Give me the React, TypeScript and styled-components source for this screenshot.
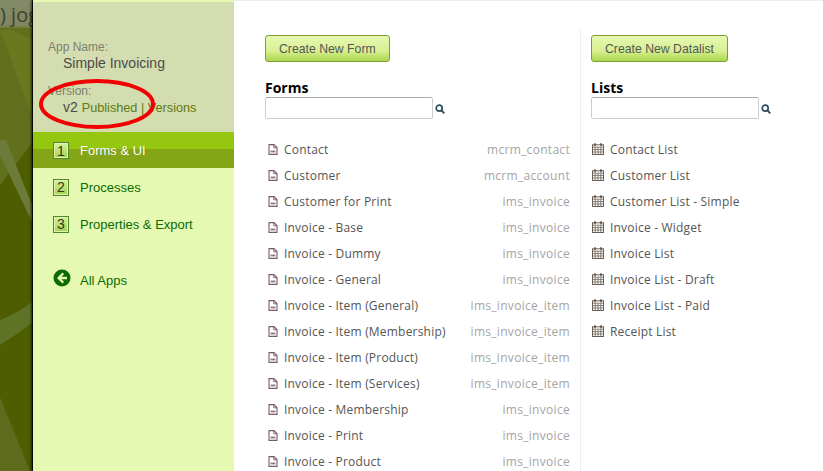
import React from 'react';
import styled, { createGlobalStyle } from 'styled-components';

const GlobalStyle = createGlobalStyle`
  html, body {
    margin: 0;
    padding: 0;
    height: 100%;
    overflow: hidden;
    background: #fff;
  }
`;

const Page = styled.div`
  position: relative;
  display: flex;
  width: 823px;
  height: 471px;
  overflow: hidden;
  font-family: "Liberation Sans", Arial, sans-serif;
`;

const Backdrop = styled.div`
  flex: 0 0 32px;
  overflow: hidden;
  background: #4d5d00;
  border-right: 1px solid #0e1200;
`;

const BackdropTop = styled.div`
  height: 28px;
  padding: 4px 0 0 0;
  box-sizing: border-box;
  background: linear-gradient(#838a68, #7f8660 90%, #6f7a3a);
  color: #3c4230;
  font-family: "Open Sans", sans-serif;
  font-size: 20px;
  line-height: 22px;
  white-space: nowrap;
`;

const BackdropArt = styled.svg`
  display: block;
`;

const Side = styled.aside`
  position: relative;
  flex: 0 0 201px;
  background: #e5f9b3;
  border-top: 2px solid #e5f9b3;
  box-sizing: border-box;
  box-shadow: -2px 0 2px rgba(0, 0, 0, 0.6);
`;

const AppInfo = styled.div`
  height: 130px;
  box-sizing: border-box;
  padding: 38px 15px 0;
  background: #d4ddb0;
  font-size: 12px;
`;

const InfoLabel = styled.div`
  color: #7b7f6c;
  line-height: 14px;
`;

const InfoValue = styled.div`
  color: #4a4a4a;
  font-size: 14px;
  line-height: 18px;
  padding-left: 15px;
  margin-bottom: 12px;
  white-space: nowrap;
`;

const InfoStatus = styled.span`
  color: #5f7a10;
  font-size: 12.7px;
`;

const NavItem = styled.div<{ $active?: boolean }>`
  display: flex;
  align-items: center;
  gap: 11px;
  height: ${p => (p.$active ? '36px' : '37px')};
  padding: 1px 0 0 20px;
  box-sizing: border-box;
  font-size: 13px;
  color: ${p => (p.$active ? '#fff' : '#0b6b00')};
  background: ${p => (p.$active ? 'linear-gradient(#95c711 0, #95c711 17px, #84a616 17px, #84a616 100%)' : 'none')};
  text-shadow: ${p => (p.$active ? '1px 0 0 rgba(90, 100, 0, 0.35)' : 'none')};
  white-space: nowrap;
`;

const NavNumber = styled.span`
  display: flex;
  align-items: center;
  justify-content: center;
  width: 14px;
  height: 15px;
  background: linear-gradient(#d6f09a, #a5d24e);
  border: 1px solid #4f8a2a;
  box-shadow: inset 0 0 0 1px #e2f3b4;
  color: #2d3b1c;
  font-size: 14px;
  text-shadow: none;
`;

const BackItem = styled(NavItem)`
  margin-top: 19px;
  gap: 9px;
`;

const BackIcon = styled.svg`
  margin-bottom: 4px;
`;

const Main = styled.main`
  flex: 1;
  display: flex;
  border-top: 1px solid #eee;
  padding: 29px 0 0 31px;
  box-sizing: border-box;
  background: #fff;
`;

const Column = styled.section<{ $wide?: boolean }>`
  width: ${p => (p.$wide ? '305px' : '232px')};
  padding-top: 5px;
`;

const Divider = styled.div`
  width: 1px;
  margin: 0 10px;
  background: #eee;
`;

const CreateButton = styled.button`
  display: block;
  height: 27px;
  padding: 0 13px;
  border: 1px solid #7ca02a;
  border-radius: 3px;
  background: linear-gradient(#e6f8b4, #d8f090 60%, #a9d64f);
  color: #555;
  font-family: "Liberation Sans", Arial, sans-serif;
  font-size: 12.25px;
`;

const Heading = styled.h3`
  margin: 17px 0 0;
  padding-bottom: 1px;
  color: #000;
  font-family: "Open Sans", sans-serif;
  font-size: 14px;
  font-weight: 700;
  line-height: 17px;
`;

const SearchRow = styled.div`
  display: flex;
  align-items: center;
  gap: 2px;
`;

const SearchInput = styled.input`
  width: 168px;
  height: 22px;
  box-sizing: border-box;
  padding: 0 4px;
  border: 1px solid #ccc;
  border-top-color: #aaa;
  border-radius: 2px;
  background: #fff;
`;

const SearchGlyph = styled.svg`
  flex: none;
  margin-top: 2px;
`;

const ItemList = styled.ul`
  list-style: none;
  margin: 17px 0 0;
  padding: 0;
`;

const ItemRow = styled.li`
  display: flex;
  align-items: center;
  height: 26px;
  color: #555;
  font-family: "Open Sans", sans-serif;
  font-size: 12px;
  white-space: nowrap;
`;

const ItemName = styled.span`
  margin-left: 6px;
  flex: 1;
  letter-spacing: 0.2px;
`;

const ItemTable = styled.span`
  color: #a5a5a5;
  letter-spacing: 0.3px;
`;

const FileGlyph = styled.svg`
  flex: none;
  margin-left: 3px;
`;

const CalendarGlyph = styled.svg`
  flex: none;
  margin-left: 1px;
`;

const Mark = styled.svg`
  position: absolute;
  left: 0;
  top: 0;
  pointer-events: none;
`;

const FileIcon = () => (
  <FileGlyph width="10" height="11" viewBox="0 0 10 11">
    <path d="M1 .6h5l3 3v6.8H1z" fill="none" stroke="#7b5a68" strokeWidth="1.1" />
    <path d="M5.8 1v2.8h3" fill="none" stroke="#7b5a68" />
    <path d="M2.6 6.6h4.8v1.8H2.6z" fill="#8d7480" />
  </FileGlyph>
);

const CalendarIcon = () => (
  <CalendarGlyph width="12" height="12" viewBox="0 0 12 12">
    <rect x=".5" y="1.8" width="11" height="9.7" fill="none" stroke="#6b5f55" />
    <path d="M.5 4.2h11M.5 6.6h11M.5 9h11M3.2 4.2v7M6 4.2v7M8.8 4.2v7" stroke="#6b5f55" strokeWidth=".8" />
    <path d="M3 .2v3M9 .2v3" stroke="#5c4a3d" strokeWidth="1.5" />
  </CalendarGlyph>
);

const SearchIcon = () => (
  <SearchGlyph width="10" height="10" viewBox="0 0 10 10">
    <circle cx="4.2" cy="4.2" r="3" fill="none" stroke="#2d5060" strokeWidth="1.7" />
    <path d="M6.5 6.5l2.8 2.8" stroke="#2d5060" strokeWidth="1.9" />
  </SearchGlyph>
);

const forms = [
  ['Contact', 'mcrm_contact'],
  ['Customer', 'mcrm_account'],
  ['Customer for Print', 'ims_invoice'],
  ['Invoice - Base', 'ims_invoice'],
  ['Invoice - Dummy', 'ims_invoice'],
  ['Invoice - General', 'ims_invoice'],
  ['Invoice - Item (General)', 'ims_invoice_item'],
  ['Invoice - Item (Membership)', 'ims_invoice_item'],
  ['Invoice - Item (Product)', 'ims_invoice_item'],
  ['Invoice - Item (Services)', 'ims_invoice_item'],
  ['Invoice - Membership', 'ims_invoice'],
  ['Invoice - Print', 'ims_invoice'],
  ['Invoice - Product', 'ims_invoice'],
];

const lists = [
  'Contact List',
  'Customer List',
  'Customer List - Simple',
  'Invoice - Widget',
  'Invoice List',
  'Invoice List - Draft',
  'Invoice List - Paid',
  'Receipt List',
];

export default function App() {
  return (
    <Page>
      <GlobalStyle />
      <Backdrop>
        <BackdropTop>)&nbsp;jog</BackdropTop>
        <BackdropArt width="32" height="443" viewBox="0 28 32 443">
          <path d="M0 28h32v115l-19 25-13 17z" fill="#62701e" />
          <path d="M0 30l12 0 20 10v75z" fill="#6b7820" />
          <path d="M0 140l6 0 26 65v17L0 155z" fill="#6c7a3a" />
          <path d="M0 320q16-6 32-18v21q-16 12-32 22z" fill="#5f7327" />
          <path d="M0 397l30 74H0z" fill="#5f6b1c" />
        </BackdropArt>
      </Backdrop>
      <Side>
        <AppInfo>
          <InfoLabel>App Name:</InfoLabel>
          <InfoValue>Simple Invoicing</InfoValue>
          <InfoLabel>Version:</InfoLabel>
          <InfoValue>v2 <InfoStatus>Published | Versions</InfoStatus></InfoValue>
        </AppInfo>
        <NavItem $active><NavNumber>1</NavNumber>Forms &amp; UI</NavItem>
        <NavItem><NavNumber>2</NavNumber>Processes</NavItem>
        <NavItem><NavNumber>3</NavNumber>Properties &amp; Export</NavItem>
        <BackItem>
          <BackIcon width="18" height="18" viewBox="0 0 18 18">
            <circle cx="9" cy="9" r="8.5" fill="#0b6b00" />
            <path d="M9.5 3.6L4 9l5.5 5.4 1.6-1.6L8.4 10.2H14V7.8H8.4l2.7-2.6z" fill="#e5f9b3" />
          </BackIcon>
          All Apps
        </BackItem>
      </Side>
      <Main>
        <Column $wide>
          <CreateButton>Create New Form</CreateButton>
          <Heading>Forms</Heading>
          <SearchRow><SearchInput /><SearchIcon /></SearchRow>
          <ItemList>
            {forms.map(([name, table]) => (
              <ItemRow key={name}>
                <FileIcon />
                <ItemName>{name}</ItemName>
                <ItemTable>{table}</ItemTable>
              </ItemRow>
            ))}
          </ItemList>
        </Column>
        <Divider />
        <Column>
          <CreateButton>Create New Datalist</CreateButton>
          <Heading>Lists</Heading>
          <SearchRow><SearchInput /><SearchIcon /></SearchRow>
          <ItemList>
            {lists.map(name => (
              <ItemRow key={name}>
                <CalendarIcon />
                <ItemName>{name}</ItemName>
              </ItemRow>
            ))}
          </ItemList>
        </Column>
      </Main>
      <Mark width="823" height="471" viewBox="0 0 823 471">
        <ellipse cx="97" cy="104" rx="56" ry="23" fill="none" stroke="#f00000" strokeWidth="4" />
      </Mark>
    </Page>
  );
}
